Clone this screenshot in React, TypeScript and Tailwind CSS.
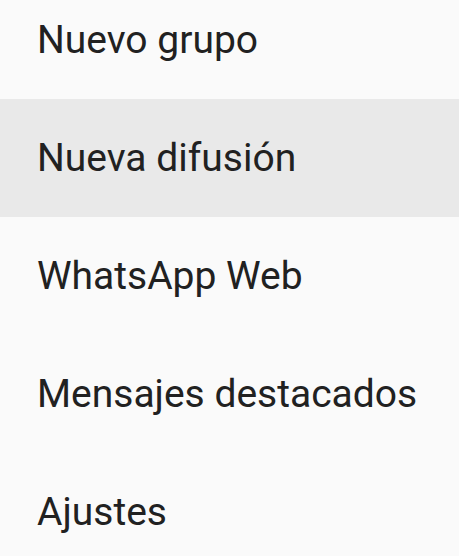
import React from "react";

const items = ["Nuevo grupo", "Nueva difusión", "WhatsApp Web", "Mensajes destacados", "Ajustes"];

export default function App() {
  return (
    <div className="w-[459px] h-[556px] overflow-hidden bg-[#fafafa]" style={{ fontFamily: "Roboto, 'Noto Sans', sans-serif" }}>
      <div className="flex flex-col -mt-[19px]">
        {items.map((t, i) => (
          <div
            key={t}
            className={`h-[118px] flex items-center pl-[37px] text-[39px] text-[#212121] ${i === 1 ? "bg-[#e9e9e9]" : ""}`}
          >
            {t}
          </div>
        ))}
      </div>
    </div>
  );
}
